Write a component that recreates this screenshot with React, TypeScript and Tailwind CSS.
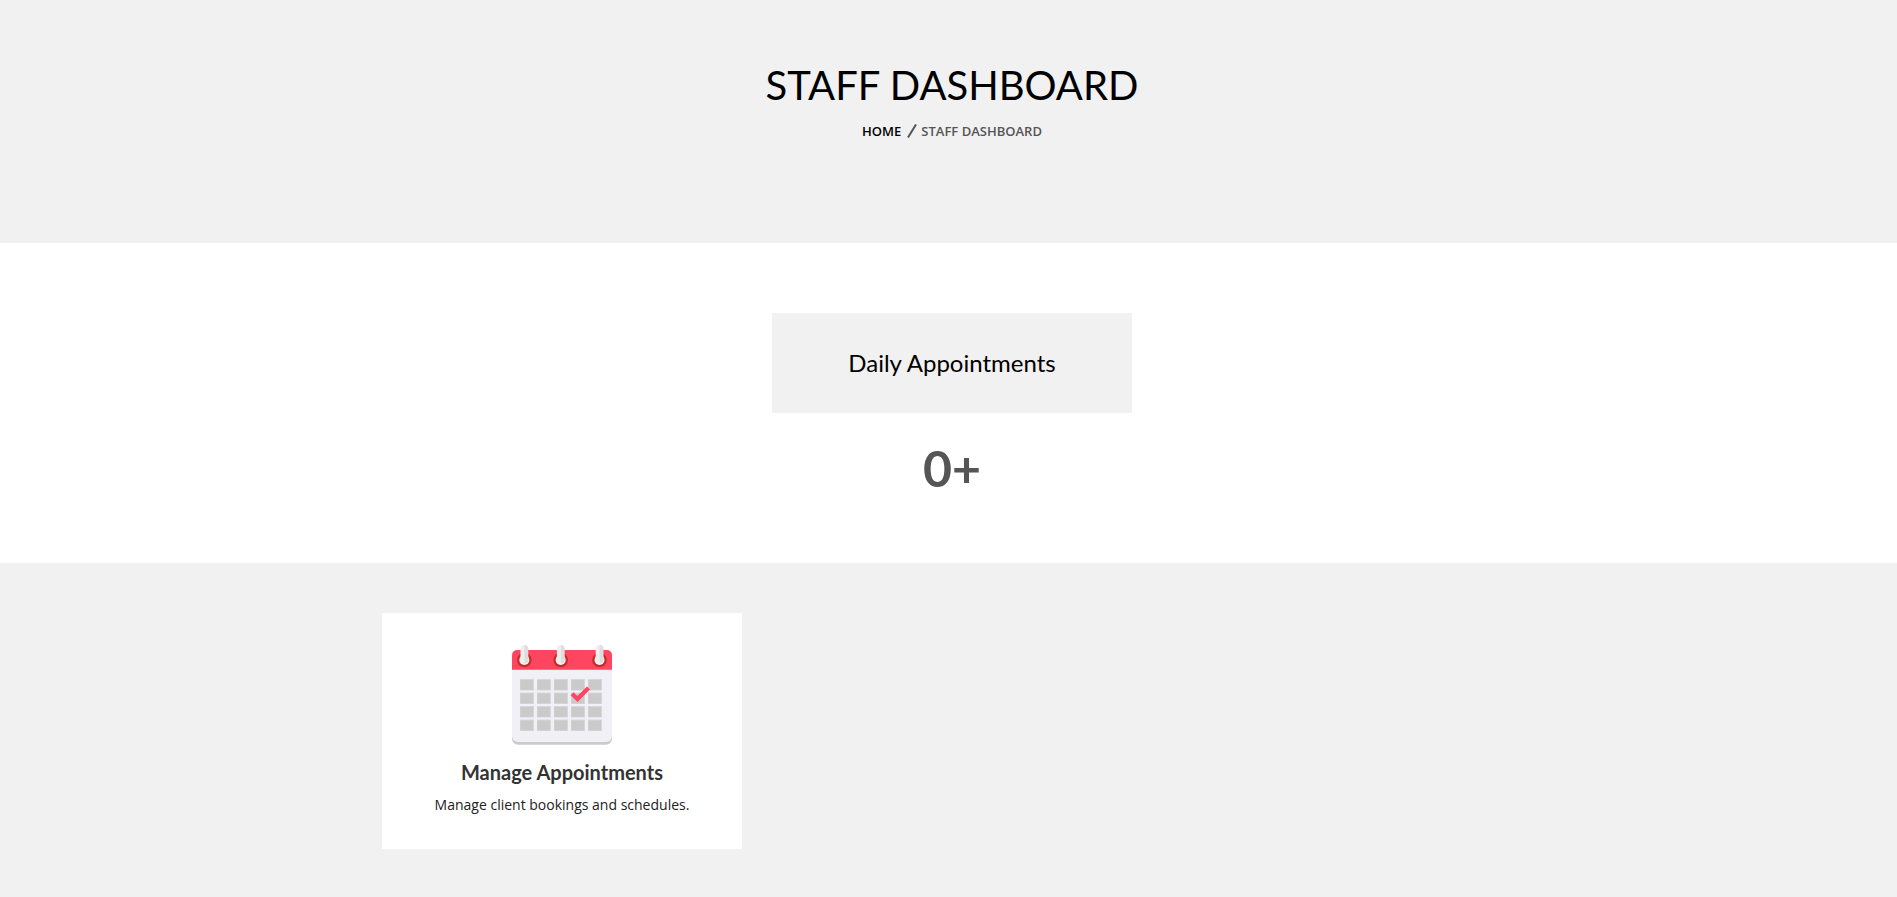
const columns = [8, 25, 42, 59, 76];
const rows = [34, 47.5, 61, 74.5];
const rings = [12.3, 48.7, 87.5];

function CalendarIcon() {
  return (
    <svg viewBox="0 0 100 100" className="size-[100px]" aria-hidden="true">
      <defs>
        <linearGradient id="pin" x1="0" x2="1" y1="0" y2="0">
          <stop offset="0.45" stopColor="#efefef" />
          <stop offset="0.55" stopColor="#dedede" />
        </linearGradient>
      </defs>
      <rect x="0" y="60" width="100" height="39.7" rx="6" fill="#cbcbcb" />
      <rect x="0" y="8" width="100" height="89" rx="6" fill="#f1f0f6" />
      <path d="M0 24.7V10.5Q0 5 5.500 5H94.500Q100 5 100 10.500V24.700Z" fill="#ff4560" />
      {rings.map((x) => (
        <g key={x}>
          <circle cx={x} cy="15" r="7.300" fill="#c92a2a" />
          <circle cx={x} cy="15" r="5" fill="#f7f7f7" />
          <rect x={x - 3.8} y="0" width="7.800" height="18.500" rx="3.800" fill="url(#pin)" />
        </g>
      ))}
      {rows.map((y) =>
        columns.map((x) => (
          <g key={`${x}-${y}`}>
            <rect x={x} y={y} width="14" height="11.500" fill="#d7d7d9" />
            <rect x={x + 0.4} y={y + 1} width="12.600" height="9.800" fill="#cacaca" />
          </g>
        )),
      )}
      <path d="M58.700 50.300L61.500 47.300L65.300 51L75 41.500L78 44.500L65.500 57Z" fill="#ff4560" />
    </svg>
  );
}

export default function App() {
  return (
    <div className="flex min-h-screen flex-col bg-white font-['Open_Sans',sans-serif]">
      <header className="bg-[#f1f1f1] pt-15 pb-25 pl-[7px] text-center">
        <h1 className="font-['Lato',sans-serif] text-[40px] leading-[50px] text-black">STAFF DASHBOARD</h1>
        <nav aria-label="Breadcrumb" className="mt-[9px]">
          <ol className="flex items-center justify-center text-[13px] leading-6 font-semibold text-[#555]">
            <li>
              <a href="#home" className="text-black">HOME</a>
            </li>
            <li aria-hidden="true" className="mr-1 ml-1.5">
              <svg viewBox="0 0 10 14" className="h-3.5 w-2.5">
                <path d="M1 13.500L9 0.500" stroke="#555" strokeWidth="2" />
              </svg>
            </li>
            <li aria-current="page">STAFF DASHBOARD</li>
          </ol>
        </nav>
      </header>

      <section className="flex flex-col items-center bg-white pt-[70px] pb-[70px] pl-[7px] font-['Lato',sans-serif]">
        <h2 className="w-[360px] max-w-full bg-[#f1f1f1] py-[35px] text-center text-[24px] leading-[30px] text-black">
          Daily Appointments
        </h2>
        <p className="mt-[30px] text-[50px] leading-[50px] font-bold text-[#555]">0+</p>
      </section>

      <main className="grow bg-[#f1f1f1] pt-[50px] pb-12 pl-[7px]">
        <div className="mx-auto grid max-w-[1140px] grid-cols-1 gap-[30px] md:grid-cols-3">
          <a href="#appointments" className="flex flex-col items-center bg-white p-8 text-center">
            <CalendarIcon />
            <h3 className="mt-[15px] font-['Lato',sans-serif] text-[20px] leading-6 font-bold text-[#333]">
              Manage Appointments
            </h3>
            <p className="mt-[9px] text-[14px] leading-6 text-[#222]">Manage client bookings and schedules.</p>
          </a>
        </div>
      </main>
    </div>
  );
}
